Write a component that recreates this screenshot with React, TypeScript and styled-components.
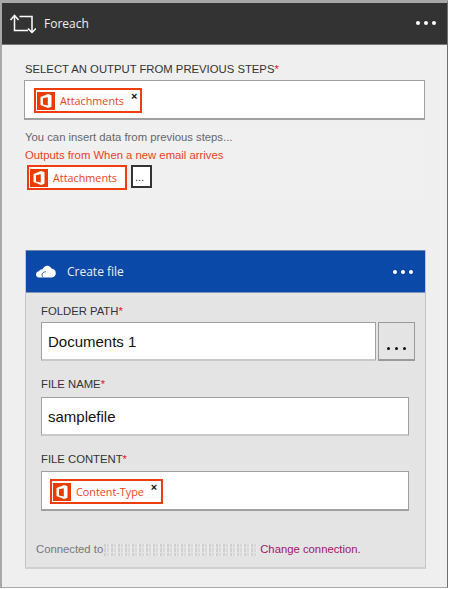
import React from 'react';
import styled, { createGlobalStyle } from 'styled-components';

const GlobalStyle = createGlobalStyle`
  html, body {
    margin: 0;
    padding: 0;
    background: #ffffff;
  }
  * {
    box-sizing: border-box;
  }
`;

const Frame = styled.div`
  width: 448px;
  height: 588px;
  background: #f0eff0;
  border-top: 3px solid #a8a8a8;
  border-left: 2px solid #a8a8a8;
  border-right: 1px solid #6f6f6f;
  border-bottom: 1px solid #a8a8a8;
  font-family: "Liberation Sans", Arial, sans-serif;
`;

const ActionBar = styled.div<{ $bg: string }>`
  display: flex;
  align-items: center;
  background: ${props => props.$bg};
  color: #ffffff;
  font-family: "Open Sans", "Noto Sans", sans-serif;
  font-size: 12px;
`;

const DarkBar = styled(ActionBar)`
  height: 42px;
  padding: 0 11px 0 7px;
  border-bottom: 1px solid #777777;
  gap: 8px;
`;

const BlueBar = styled(ActionBar)`
  height: 43px;
  padding: 0 12px 0 10px;
  gap: 9px;
  border-top: 1px solid #6f85ad;
  border-bottom: 1px solid #7f95bd;
`;

const BarTitle = styled.span`
  flex: 1;
  color: #f0f0f0;
`;

const Dots = styled.div`
  display: flex;
  gap: 4px;
`;

const DarkDots = styled(Dots)`
  padding-bottom: 2px;
`;

const Dot = styled.i<{ $color?: string; $size?: number }>`
  display: block;
  width: ${props => props.$size ?? 4}px;
  height: ${props => props.$size ?? 4}px;
  border-radius: 50%;
  background: ${props => props.$color ?? '#ffffff'};
`;

const Section = styled.section`
  padding: 17px 22px 0;
`;

const FieldLabel = styled.div`
  font-size: 11.3px;
  line-height: 14px;
  color: #333333;
  text-transform: uppercase;
  white-space: nowrap;
`;

const SectionLabel = styled(FieldLabel)`
  padding-left: 1px;
`;

const Required = styled.span`
  color: #e8112d;
`;

const TagInput = styled.div<{ $width?: number; $top?: number; $pad: number }>`
  width: ${props => props.$width ?? 401}px;
  height: 40px;
  margin-top: ${props => props.$top ?? 4}px;
  padding: 7px ${props => props.$pad}px;
  display: flex;
  align-items: flex-start;
  background: #ffffff;
  border: 1px solid #a0a0a0;
  border-bottom-width: 2px;
`;

const Token = styled.div<{ $width: number }>`
  width: ${props => props.$width}px;
  height: 25px;
  display: flex;
  align-items: center;
  gap: 5px;
  padding-left: 1px;
  background: #ffffff;
  border: 2px solid #ef3d12;
  color: #e8421a;
  font-family: "Open Sans", "Noto Sans", sans-serif;
  font-size: 10.8px;
  white-space: nowrap;
`;

const TokenClose = styled.span`
  align-self: flex-start;
  margin-left: 2px;
  color: #111111;
  font-family: "Liberation Sans", Arial, sans-serif;
  font-size: 11px;
  line-height: 13px;
  font-weight: 700;
`;

const HintPanel = styled.div`
  margin-top: 8px;
  height: 73px;
  background: #f1f0f1;
  padding: 2px 0 0 1px;
`;

const HintText = styled.div`
  font-size: 11.3px;
  line-height: 15px;
  color: #666666;
  white-space: nowrap;
`;

const OutputsText = styled(HintText)`
  margin-top: 3px;
  color: #e8421a;
`;

const OutputRow = styled.div`
  display: flex;
  gap: 4px;
  margin: 2px 0 0 2px;
`;

const MoreSmall = styled.div`
  width: 21px;
  height: 23px;
  background: #ffffff;
  border: 2px solid #333333;
  color: #222222;
  font-size: 11px;
  line-height: 20px;
  padding-left: 2px;
`;

const Card = styled.section`
  width: 401px;
  height: 319px;
  margin: 49px 0 0 23px;
  background: #e4e4e4;
  border-left: 1px solid #c4c4c4;
  border-right: 1px solid #c4c4c4;
  border-bottom: 2px solid #d0d0d0;
`;

const CardBody = styled.div`
  padding: 11px 0 0 15px;
`;

const CardLabel = styled(FieldLabel)`
  margin-top: 16px;
  &:first-child {
    margin-top: 0;
  }
`;

const InputRow = styled.div<{ $top?: number }>`
  display: flex;
  gap: 2px;
  margin-top: ${props => props.$top ?? 4}px;
`;

const TextBox = styled.div<{ $width: number }>`
  width: ${props => props.$width}px;
  height: 39px;
  padding-left: 6px;
  display: flex;
  align-items: center;
  background: #ffffff;
  border: 1px solid #a0a0a0;
  border-bottom: 2px solid #c8c8c8;
  color: #111111;
  font-size: 15px;
`;

const BrowseButton = styled.div`
  width: 37px;
  height: 39px;
  padding: 0 0 9px;
  display: flex;
  align-items: flex-end;
  justify-content: center;
  gap: 5px;
  background: #e4e4e4;
  border: 1px solid #999999;
  border-bottom-width: 2px;
`;

const ConnectionRow = styled.div`
  display: flex;
  align-items: center;
  margin: 31px 0 0 -5px;
  font-size: 11.3px;
  line-height: 14px;
  color: #777777;
  white-space: nowrap;
`;

/* masked account name in the screenshot */
const MaskedText = styled.span`
  width: 153px;
  height: 13px;
  margin-left: 1px;
  background:
    linear-gradient(#e4e4e4 0 1px, transparent 1px 4px, #e4e4e4 4px 5px, transparent 5px 9px, #e4e4e4 9px 10px, transparent 10px),
    repeating-linear-gradient(90deg, #cfcfcf 0 2px, #e6e6e6 2px 3px, #d8d8d8 3px 5px, #ebebeb 5px 7px);
  filter: blur(0.4px);
`;

const ChangeLink = styled.span`
  margin-left: 3px;
  color: #a0146e;
`;

const OfficeIcon = () => (
  <svg width="18" height="18" viewBox="0 0 18 18">
    <rect width="18" height="18" fill="#eb3c00" />
    <path d="M3.5 5 11 2l3.5 1.2v11.6L11 16l-7.5-3z" fill="#ffffff" />
    <path d="M6 6.2 10.8 5.2v8.4L6 12.4z" fill="#eb3c00" />
  </svg>
);

const LoopIcon = () => (
  <svg width="27" height="22" viewBox="0 0 27 22" fill="none" stroke="#ffffff" strokeWidth="1.5">
    <path d="M1.5 7 5.5 2.5 9.5 7" />
    <path d="M5.5 3v14.5h13.5" />
    <path d="M10.5 3.5H23V19" />
    <path d="M19 15.5l4 4 4-4" />
  </svg>
);

const CloudIcon = () => (
  <svg width="22" height="14" viewBox="0 0 24 15" fill="#ffffff">
    <path d="M7.2 4.6C8.2 1.8 10.4.4 12.6.6c2 .2 3.6 1.4 4.2 3.2 2.6.2 4.6 2 4.8 4.6.2 2.8-1.6 5-4.4 5H3.2C1.2 13.4 0 12 0 10.2c0-2 1.4-3.4 3.2-3.6.8-1.4 2.4-2.2 4-2z" />
    <path d="M8 13.4c-1.8-1-2-3.8-.2-5.2 1-.8 2-1 3-1" fill="none" stroke="#0a49a8" strokeWidth="0.9" />
  </svg>
);

export default function App() {
  return (
    <>
      <GlobalStyle />
      <Frame>
        <DarkBar $bg="#333333">
          <LoopIcon />
          <BarTitle>Foreach</BarTitle>
          <DarkDots>
            <Dot />
            <Dot />
            <Dot />
          </DarkDots>
        </DarkBar>

        <Section>
          <SectionLabel>
            Select an output from previous steps<Required>*</Required>
          </SectionLabel>
          <TagInput $pad={9}>
            <Token $width={108}>
              <OfficeIcon />
              Attachments
              <TokenClose>×</TokenClose>
            </Token>
          </TagInput>
          <HintPanel>
            <HintText>You can insert data from previous steps...</HintText>
            <OutputsText>Outputs from When a new email arrives</OutputsText>
            <OutputRow>
              <Token $width={100}>
                <OfficeIcon />
                Attachments
              </Token>
              <MoreSmall>...</MoreSmall>
            </OutputRow>
          </HintPanel>
        </Section>

        <Card>
          <BlueBar $bg="#0a49a8">
            <CloudIcon />
            <BarTitle>Create file</BarTitle>
            <Dots>
              <Dot />
              <Dot />
              <Dot />
            </Dots>
          </BlueBar>
          <CardBody>
            <CardLabel>
              Folder path<Required>*</Required>
            </CardLabel>
            <InputRow>
              <TextBox $width={335}>Documents 1</TextBox>
              <BrowseButton>
                <Dot $color="#111111" $size={3} />
                <Dot $color="#111111" $size={3} />
                <Dot $color="#111111" $size={3} />
              </BrowseButton>
            </InputRow>
            <CardLabel>
              File name<Required>*</Required>
            </CardLabel>
            <InputRow $top={6}>
              <TextBox $width={368}>samplefile</TextBox>
            </InputRow>
            <CardLabel>
              File content<Required>*</Required>
            </CardLabel>
            <TagInput $width={368} $top={5} $pad={8}>
              <Token $width={113}>
                <OfficeIcon />
                Content-Type
                <TokenClose>×</TokenClose>
              </Token>
            </TagInput>
            <ConnectionRow>
              Connected to
              <MaskedText />
              <ChangeLink>Change connection.</ChangeLink>
            </ConnectionRow>
          </CardBody>
        </Card>
      </Frame>
    </>
  );
}
